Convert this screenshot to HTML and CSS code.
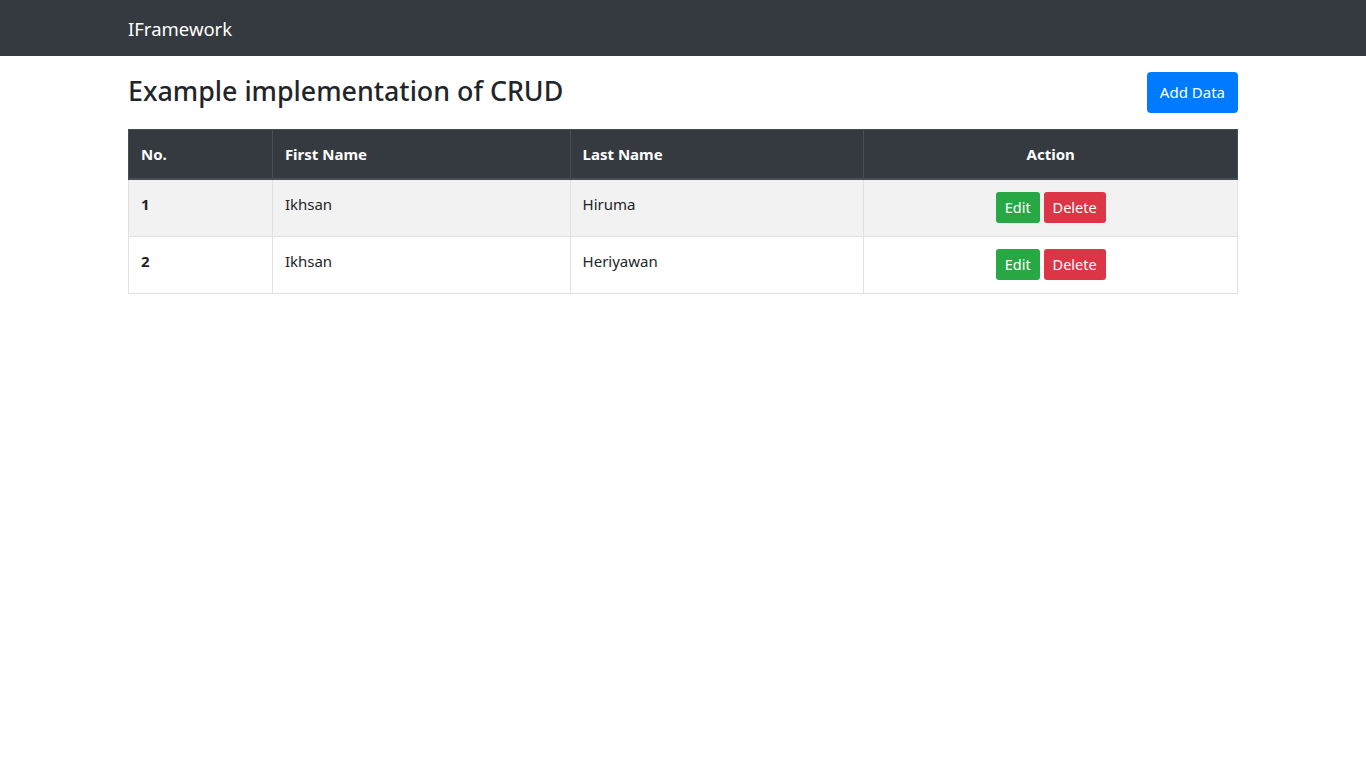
FILE: index.html
```html
<!DOCTYPE html>
<html lang="en">
<head>
<meta charset="utf-8">
<title>IFramework</title>
<link rel="stylesheet" href="styles.css">
</head>
<body>
<nav class="navbar">
  <div class="container">
    <a class="brand" href="#">IFramework</a>
  </div>
</nav>
<main class="container main">
  <div class="title-row">
    <h3 class="title">Example implementation of CRUD</h3>
    <a class="btn btn-primary" href="#">Add Data</a>
  </div>
  <table class="table">
    <colgroup>
      <col class="c1"><col class="c2"><col class="c3"><col class="c4">
    </colgroup>
    <thead>
      <tr>
        <th>No.</th>
        <th>First Name</th>
        <th>Last Name</th>
        <th class="center">Action</th>
      </tr>
    </thead>
    <tbody>
      <tr class="striped">
        <th>1</th>
        <td>Ikhsan</td>
        <td>Hiruma</td>
        <td class="center actions"><a class="btn-sm btn-success" href="#">Edit</a> <a class="btn-sm btn-danger" href="#">Delete</a></td>
      </tr>
      <tr>
        <th>2</th>
        <td>Ikhsan</td>
        <td>Heriyawan</td>
        <td class="center actions"><a class="btn-sm btn-success" href="#">Edit</a> <a class="btn-sm btn-danger" href="#">Delete</a></td>
      </tr>
    </tbody>
  </table>
</main>
</body>
</html>
```
FILE: styles.css
```css
* { box-sizing: border-box; }
html, body { margin: 0; padding: 0; }
body {
  font-family: "Noto Sans", "Open Sans", sans-serif;
  font-size: 16px;
  line-height: 1.5;
  color: #212529;
  background: #fff;
}
a { text-decoration: none; }
.container {
  width: 1140px;
  margin: 0 auto;
  padding: 0 15px;
}
.navbar {
  background: #343a40;
  height: 56px;
  display: flex;
  align-items: center;
}
.brand {
  color: #fff;
  font-size: 18.5px;
  line-height: 30px;
  display: inline-block;
  padding-top: 2px;
}
.main { padding-top: 16px; }
.title-row {
  display: flex;
  justify-content: space-between;
  align-items: flex-start;
}
.title {
  margin: 0;
  font-size: 26.8px;
  font-weight: 500;
  line-height: 1.2;
  padding-top: 3px;
}
.btn {
  display: inline-block;
  height: 41px;
  line-height: 24px;
  padding: 8px 13px;
  font-size: 15px;
  border-radius: 4px;
  color: #fff;
}
.btn-primary { background: #007bff; }
.table {
  width: 100%;
  margin-top: 16px;
  border-collapse: collapse;
  border: 1px solid #dee2e6;
}
.c1 { width: 144px; }
.c2 { width: 298px; }
.c3 { width: 294px; }
.c4 { width: 374px; }
.table th, .table td {
  padding: 12px;
  text-align: left;
  vertical-align: top;
  border: 1px solid #dee2e6;
  font-size: 15px;
  line-height: 24px;
}
.table thead th {
  background: #343a40;
  color: #fff;
  border-color: #454d55;
  border-bottom-width: 2px;
  font-weight: 700;
}
.table tbody th { font-weight: 700; }
.table .center { text-align: center; }
.table td.actions { padding: 12px 12px 13px; line-height: 31px; }
.striped { background: #f2f2f2; }
.btn-sm {
  display: inline-block;
  padding: 3px 9px;
  font-size: 14.5px;
  line-height: 25px;
  height: 31px;
  border-radius: 3px;
  color: #fff;
  vertical-align: top;
}
.btn-success { background: #28a745; }
.btn-danger { background: #dc3545; }
```
